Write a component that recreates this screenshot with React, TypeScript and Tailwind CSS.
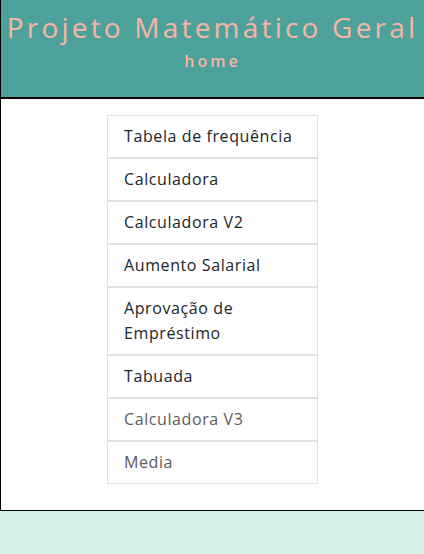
export default function App() {
  const items = [
    { t: "Tabela de frequência", c: "text-[#212529]" },
    { t: "Calculadora", c: "text-[#212529]" },
    { t: "Calculadora V2", c: "text-[#212529]" },
    { t: "Aumento Salarial", c: "text-[#212529]" },
    { t: "Aprovação de Empréstimo", c: "text-[#212529]" },
    { t: "Tabuada", c: "text-[#212529]" },
    { t: "Calculadora V3", c: "text-[#5c5c5c]" },
    { t: "Media", c: "text-[#5c5c5c]" },
  ];
  return (
    <div className="min-h-[554px] bg-[#d8f0ea]" style={{ fontFamily: '"Open Sans", "Noto Sans", sans-serif' }}>
      <div className="border-l border-b border-black">
        <header className="h-[99px] bg-[#4ca29a] border-b-2 border-black flex flex-col items-center text-[#f9b4a6]">
          <h1 className="mt-[7px] text-[28px] leading-[40px] tracking-[3.2px] whitespace-nowrap">Projeto Matemático Geral</h1>
          <div className="mt-[2px] text-[16px] leading-[24px] font-semibold tracking-[3px]">home</div>
        </header>
        <main className="bg-white pt-[16px] pb-[26px] flex justify-center">
          <ul className="w-[211px] flex flex-col">
            {items.map((it) => (
              <li key={it.t} className={`border border-[#dee2e6] px-4 py-[8px] text-[16px] leading-[25px] tracking-[0.6px] ${it.c}`}>
                {it.t}
              </li>
            ))}
          </ul>
        </main>
      </div>
    </div>
  );
}
